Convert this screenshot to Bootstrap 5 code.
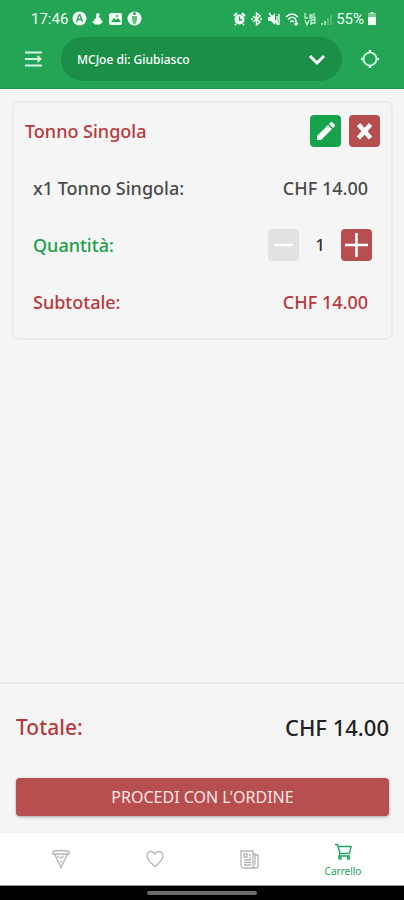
<!DOCTYPE html>
<html lang="it">
<head>
<meta charset="utf-8">
<meta name="viewport" content="width=device-width, initial-scale=1">
<title>Carrello</title>
<link rel="stylesheet" href="https://cdn.jsdelivr.net/npm/bootstrap@5.3.0/dist/css/bootstrap.min.css">
<style>
  :root { --brand: #23a555; --brand-dark: #1b8f48; --action: #b74e50; --ink-red: #b8393c; }
  body { background: #f5f5f5; font-family: "Noto Sans", "Open Sans", sans-serif; font-size: 18px; line-height: 24px; color: #4b4b4b; }
  svg { display: block; flex: none; }
  .top { background: var(--brand); border-bottom: 1px solid #12984a; padding-bottom: 7px; }
  .status { height: 37px; padding: 0 28px 0 31px; font-family: Roboto, sans-serif; font-size: 15px; line-height: 16px; color: #effff3; }
  .tool { padding: 0 24px; gap: 18px; }
  .plain { background: none; border: 0; padding: 0; }
  .store { position: relative; }
  .store select { appearance: none; width: 100%; height: 44px; border: 0; border-radius: 22px; background: var(--brand-dark); color: #fff; font-size: 12px; font-weight: 500; padding: 2px 44px 0 16px; }
  .store svg { position: absolute; right: 16px; top: 15px; pointer-events: none; }
  .order { margin: 12px 11px 0 12px; border: 2px solid #eaeaea; border-radius: 7px; padding: 12px 11px 20px; }
  .order h2 { font-size: 18px; line-height: 24px; font-weight: 500; color: var(--ink-red); }
  .line { padding: 0 12px 0 8px; height: 32px; margin-top: 25px; font-weight: 500; }
  .qty { margin-right: -4px; }
  .qty output { width: 42px; color: #333; font-size: 17px; }
  .tile { width: 31px; height: 32px; border: 0; border-radius: 4px; padding: 0; color: #fff; background: var(--action); }
  .tile.edit { background: #17a34b; }
  .tile:disabled { background: #e2e2e2; color: #fff; }
  .red { color: var(--ink-red); }
  .green { color: #1d9f4c; }
  .summary { border-top: 2px solid #e9e9e9; padding: 27px 15px 17px 16px; }
  .sum { font-size: 22px; line-height: 32px; font-weight: 500; }
  .sum dt { font-size: 21px; font-weight: 500; }
  .sum dd { color: #222; }
  .pay { margin-top: 35px; height: 38px; border-radius: 4px; background: var(--action); color: #fbe6e4; font-size: 16px; padding: 0; box-shadow: 0 1px 3px #0005; }
  .pay:hover { background: #a84547; color: #fff; }
  .tabs { background: #fff; height: 53px; padding: 0 14px; border-bottom: 1px solid #999; }
  .tabs a { color: #b5b5b5; text-decoration: none; font-size: 10px; line-height: 14px; }
  .tabs a.on { color: #21a464; padding-top: 2px; }
  .gesture { background: #000; height: 14px; }
  .gesture span { width: 27%; height: 4px; border-radius: 2px; background: #6b6b6b; }
</style>
<script src="https://cdn.jsdelivr.net/npm/bootstrap@5.3.0/dist/js/bootstrap.bundle.min.js"></script>
</head>
<body class="d-flex flex-column min-vh-100">
<header class="top">
  <div class="status d-flex justify-content-between align-items-center">
    <div class="d-flex align-items-center gap-1">
      <span>17:46</span>
      <svg width="15" height="15" viewBox="0 0 15 15"><circle cx="7.500" cy="7.500" r="7" fill="#effff3"/><path d="M4.500 11 7 4h1l2.500 7M6 8.500h3" fill="none" stroke="#23a555" stroke-width="1.300"/></svg>
      <svg width="13" height="14" viewBox="0 0 13 14" fill="#effff3"><path d="M7 1c2 0 2 3 .5 4l3 2-1 1L12 9.500 9 12.500H4L1 9.500 4 9 2.500 7.500 5 6.500C5 4 5 1 7 1z"/></svg>
      <svg width="15" height="14" viewBox="0 0 15 14"><rect x="1" y="1" width="13" height="12" rx="2" fill="#effff3"/><path d="m3 10 3-4 2 2 2-2 3 4z" fill="#23a555"/><circle cx="9" cy="4" r="1" fill="#23a555"/></svg>
      <svg width="15" height="15" viewBox="0 0 15 15"><circle cx="7.500" cy="7.500" r="7" fill="#effff3"/><path d="M5 5h5v4L8.500 13h-2L5 9z" fill="#63be82"/><circle cx="7.500" cy="2.500" r="1.500" fill="#23a555"/></svg>
    </div>
    <div class="d-flex align-items-center gap-1">
      <svg width="13" height="14" viewBox="0 0 13 14"><circle cx="6.500" cy="7.500" r="5" fill="#effff3"/><path d="M1 4 4 1m8 3L9 1M3 12l-1 1m8-1 1 1" stroke="#effff3" stroke-width="2"/><path d="M6.500 4.500V8H9" fill="none" stroke="#23a555" stroke-width="1.300"/></svg>
      <svg width="13" height="14" viewBox="0 0 13 14" fill="none" stroke="#effff3" stroke-width="1.500"><path d="m3 4 7 6-3.500 3V1L10 4l-7 6"/><path d="M1 7h2m7 0h2"/></svg>
      <svg width="14" height="14" viewBox="0 0 14 14"><path d="M1 5h3l4-4v12L4 9H1z" fill="#effff3"/><path d="M10 4v7m2-9v11M2 1l9 12" stroke="#effff3" stroke-width="1.400"/></svg>
      <svg width="15" height="14" viewBox="0 0 15 14" fill="none" stroke="#effff3" stroke-width="1.500"><path d="M1 5c4-4 8-4 12 0M3 7.500c3-3 6-3 8 0M5 10c1.500-1.500 3-1.500 4 0M11 8v5m-1.500-1.500L11 13l2-2"/></svg>
      <svg width="13" height="14" viewBox="0 0 13 14" fill="none" stroke="#c5efd1" stroke-width="1.300"><path d="M1 1v5h3M6 3v3h2V3zM10 1v5h2M1 8l2 5 2-5M7 13V8h4v3H7"/></svg>
      <svg width="11" height="14" viewBox="0 0 11 14" stroke="#c5efd1" stroke-width="1.500"><path d="M1 11v2m3-4v4"/><path d="M7 6v7m3-10v10" opacity=".4"/></svg>
      <span>55%</span>
      <svg width="8" height="13" viewBox="0 0 8 13"><path d="M2.500 0h3v1.500H8V13H0V1.500h2.500z" fill="#effff3"/><path d="M0 1.500h8V5H0z" fill="#7aca94"/></svg>
    </div>
  </div>
  <div class="tool d-flex align-items-center">
    <button class="plain" type="button" aria-label="Menu"><svg width="19" height="18" viewBox="0 0 19 18" fill="none" stroke="#d6f8df" stroke-width="1.800"><path d="M1 2.500h17M1 9h15M1 15.500h17M13.500 6 16.500 9l-3 3"/></svg></button>
    <div class="store flex-grow-1">
      <select aria-label="Punto vendita"><option>MCJoe di: Giubiasco</option></select>
      <svg width="18" height="14" viewBox="0 0 18 14" fill="none" stroke="#fff" stroke-width="3"><path d="m2 4 7 7 7-7"/></svg>
    </div>
    <button class="plain" type="button" aria-label="Posizione"><svg width="20" height="20" viewBox="0 0 20 20" fill="none" stroke="#dcffe5" stroke-width="1.700"><circle cx="10" cy="10" r="6.500"/><path d="M10 1v3m0 12v3M1 10h3m12 0h3" stroke-width="2.500"/></svg></button>
  </div>
</header>

<main class="flex-grow-1">
  <section class="order">
    <div class="d-flex justify-content-between align-items-center">
      <h2 class="m-0">Tonno Singola</h2>
      <div class="d-flex gap-2">
        <button class="tile edit" type="button" aria-label="Modifica"><svg width="31" height="32" viewBox="0 0 31 32" fill="currentColor"><path d="m7 21 11-11 4 4-11 11H7zM19 9l1.500-1.500a1.500 1.500 0 0 1 2 0l2 2a1.500 1.500 0 0 1 0 2L23 13z"/></svg></button>
        <button class="tile" type="button" aria-label="Rimuovi"><svg width="31" height="32" viewBox="0 0 31 32" fill="none" stroke="currentColor" stroke-width="4.500"><path d="m9.500 9.500 12 13.500m0-13.500-12 13.500"/></svg></button>
      </div>
    </div>
    <div class="line d-flex justify-content-between align-items-center"><span>x1 Tonno Singola:</span><span>CHF 14.00</span></div>
    <div class="line d-flex justify-content-between align-items-center">
      <label class="green" for="quantita">Quantità:</label>
      <div class="qty d-flex align-items-center">
        <button class="tile" type="button" aria-label="Diminuisci" disabled><svg width="31" height="32" viewBox="0 0 31 32"><path d="M6 16h19" stroke="currentColor" stroke-width="2.500"/></svg></button>
        <output id="quantita" class="text-center">1</output>
        <button class="tile" type="button" aria-label="Aumenta"><svg width="31" height="32" viewBox="0 0 31 32"><path d="M4 16h23M15.500 4v24" stroke="currentColor" stroke-width="2.500"/></svg></button>
      </div>
    </div>
    <div class="line red d-flex justify-content-between align-items-center"><span>Subtotale:</span><span>CHF 14.00</span></div>
  </section>
</main>

<footer>
  <div class="summary">
    <dl class="sum d-flex justify-content-between m-0"><dt class="red">Totale:</dt><dd class="m-0">CHF 14.00</dd></dl>
    <button class="pay btn w-100" type="button">PROCEDI CON L'ORDINE</button>
  </div>
  <nav class="tabs d-flex" aria-label="Principale">
    <a class="flex-fill w-25 d-flex justify-content-center align-items-center" href="#menu" aria-label="Menu pizze"><svg width="18" height="20" viewBox="0 0 18 20" fill="none" stroke="currentColor" stroke-width="1.300"><path d="M1 2.500Q9 .5 17 2.500V5H1zM2.500 5 9 18.500 15.500 5M6 6.500v2m5-2v2M9 11.500v2M7.500 8.500h3"/></svg></a>
    <a class="flex-fill w-25 d-flex justify-content-center align-items-center" href="#preferiti" aria-label="Preferiti"><svg width="18" height="18" viewBox="0 0 18 18" fill="none" stroke="currentColor" stroke-width="1.300"><path d="M9 16.500C5 13 1 10 1 6c0-5 6-6 8-2 2-4 8-3 8 2 0 4-4 7-8 10.500z"/></svg></a>
    <a class="flex-fill w-25 d-flex justify-content-center align-items-center" href="#notizie" aria-label="Notizie"><svg width="19" height="19" viewBox="0 0 19 19" fill="none" stroke="currentColor" stroke-width="1.300"><path d="M1 1h12v14q0 3 3 3H4q-3 0-3-3zM13 4h2v11M15 5h3v11q0 2-2 2M4 4h3v3H4zM9 5h2M9 8h2M4 10h7M4 12.500h7M4 15h7"/></svg></a>
    <a class="on flex-fill w-25 d-flex flex-column justify-content-center align-items-center gap-1" href="#carrello" aria-current="page"><svg width="17" height="17" viewBox="0 0 17 17" fill="none" stroke="currentColor" stroke-width="1.400"><path d="M0 1.500h2.500L5 10.500h9.500M3 3.500h13L14.500 10.500M5 10.500l-1 2.500h11"/><circle cx="5" cy="15" r="1.200"/><circle cx="13.500" cy="15" r="1.200"/></svg><span>Carrello</span></a>
  </nav>
  <div class="gesture d-flex justify-content-center align-items-center"><span></span></div>
</footer>
</body>
</html>
